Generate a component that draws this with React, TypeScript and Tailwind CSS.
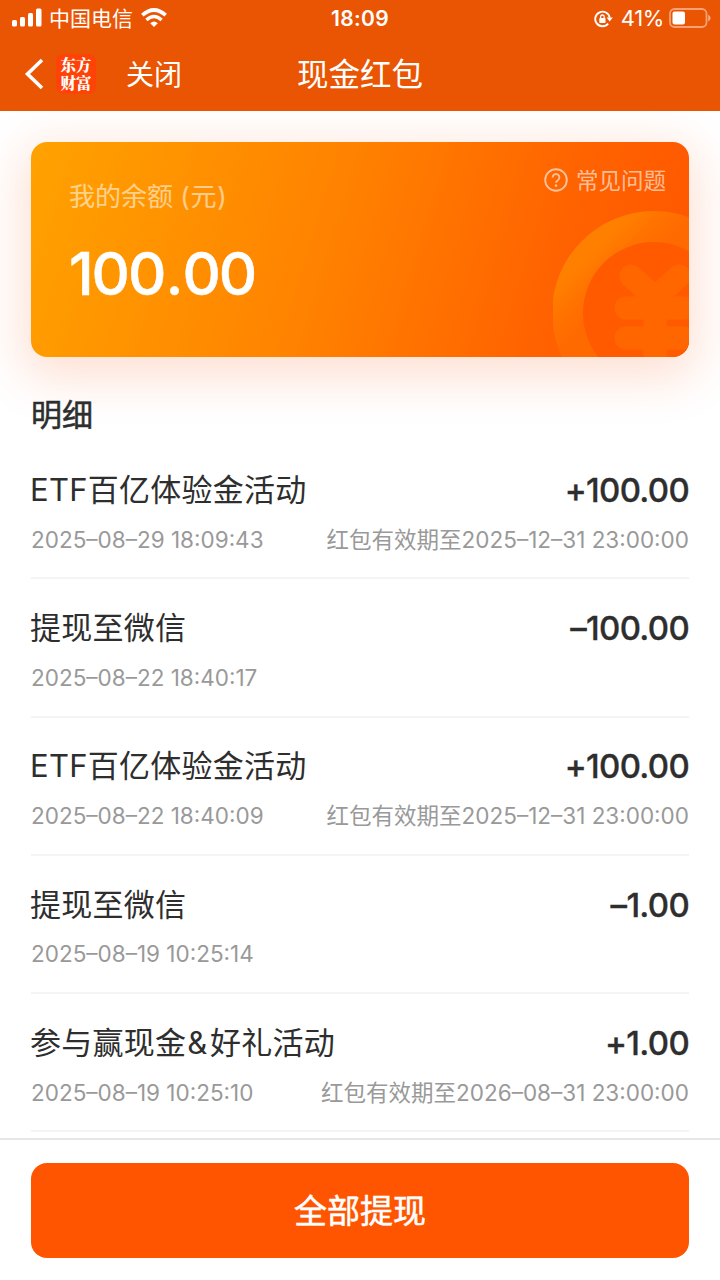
import type { ReactNode } from "react";

type Entry = {
  title: ReactNode;
  amount: string;
  time: string;
  expires?: string;
};

const entries: Entry[] = [
  {
    title: "ETF百亿体验金活动",
    amount: "+100.00",
    time: "2025–08–29 18:09:43",
    expires: "红包有效期至2025–12–31 23:00:00",
  },
  {
    title: "提现至微信",
    amount: "–100.00",
    time: "2025–08–22 18:40:17",
  },
  {
    title: "ETF百亿体验金活动",
    amount: "+100.00",
    time: "2025–08–22 18:40:09",
    expires: "红包有效期至2025–12–31 23:00:00",
  },
  {
    title: "提现至微信",
    amount: "–1.00",
    time: "2025–08–19 10:25:14",
  },
  {
    title: (
      <>
        参与赢现金<span className="pr-[2.5px] pl-px">&</span>好礼活动
      </>
    ),
    amount: "+1.00",
    time: "2025–08–19 10:25:10",
    expires: "红包有效期至2026–08–31 23:00:00",
  },
];

function StatusBar() {
  return (
    <div className="grid h-9 grid-cols-3 items-center">
      <div className="flex items-center pl-3">
        <svg className="-mt-px" width="30" height="20" viewBox="0 0 30 20" fill="#fff">
          <rect x="0" y="12" width="5" height="6.5" rx="1.5" />
          <rect x="8" y="9" width="5" height="9.5" rx="1.5" />
          <rect x="16" y="5" width="5" height="13.5" rx="1.5" />
          <rect x="24" y="0.5" width="5.5" height="18" rx="1.5" />
        </svg>
        <span className="mt-px ml-[7px] text-[21px] leading-9">中国电信</span>
        <svg className="-mt-px ml-2" width="26" height="20" viewBox="0 0 26 20" fill="none" stroke="#fff">
          <path d="M1.3 7.2Q13 -3.2 24.7 7.2" strokeWidth="3.6" />
          <path d="M5.4 12Q13 5.2 20.6 12" strokeWidth="3.4" />
          <path d="M9.2 15.2Q13 11.8 16.8 15.2L13 19Z" fill="#fff" stroke="none" />
        </svg>
      </div>
      <span className="mt-px text-center text-[21px] font-semibold tracking-[0.3px]">18:09</span>
      <div className="flex items-center justify-end pr-[9px]">
        <svg width="19" height="18" viewBox="0 0 19 18" fill="none" stroke="#fff">
          <path d="M14.2 13.6A7.3 7.3 0 1 1 15.7 7.6" strokeWidth="1.9" />
          <path d="M12.6 7.6H18.8L15.7 11.6Z" fill="#fff" stroke="none" />
          <rect x="5.3" y="8" width="6.2" height="5" rx="0.8" fill="#fff" stroke="none" />
          <path d="M6.6 8.3V6.8a1.8 1.8 0 0 1 3.6 0V8.3" strokeWidth="1.3" />
        </svg>
        <span className="ml-2 text-[22px] tracking-[-0.4px]">41%</span>
        <svg className="-mt-px ml-[5px]" width="42" height="20" viewBox="0 0 42 20" fill="none">
          <rect x="1" y="1" width="36.5" height="18" rx="4.5" stroke="#fff" strokeOpacity="0.45" strokeWidth="1.8" />
          <rect x="3.5" y="3.5" width="12.5" height="13" rx="2" fill="#fff" />
          <path d="M39.2 6.5Q41.6 8 41.6 10T39.2 13.5Z" fill="#fff" fillOpacity="0.5" />
        </svg>
      </div>
    </div>
  );
}

function NavBar() {
  return (
    <div className="grid h-[75px] grid-cols-3 items-center">
      <div className="flex items-center pl-6">
        <svg width="20" height="32" viewBox="0 0 20 32" fill="none" stroke="#fff" strokeWidth="3.6">
          <path d="M18 2L3.5 16L18 30" />
        </svg>
        <div className="ml-3 flex h-10 w-10 items-center justify-center rounded-lg bg-[#ff4205]">
          <p className="w-8 text-center font-['Noto_Serif_CJK_SC','Noto_Sans_CJK_SC',sans-serif] text-[15.5px] leading-[17.5px] font-black break-all">
            东方财富
          </p>
        </div>
        <span className="mt-0.5 ml-[30px] text-[28px] leading-10">关闭</span>
      </div>
      <h1 className="mt-0.5 text-center text-[31.5px] leading-10">现金红包</h1>
    </div>
  );
}

function Coin() {
  return (
    <svg className="absolute right-0 bottom-0" width="136" height="147" viewBox="0 0 136 147" fill="none">
      <defs>
        <linearGradient id="ring" x1="0.18" y1="0.18" x2="0.36" y2="0.36">
          <stop offset="0" stopColor="#ff8000" />
          <stop offset="0.2" stopColor="#ff7d00" />
          <stop offset="0.5" stopColor="#ff7300" />
          <stop offset="1" stopColor="#ff6a00" />
        </linearGradient>
      </defs>
      <circle cx="101" cy="103" r="72" fill="#ff5a00" />
      <path
        d="M101 1a102 102 0 1 0 0 204a102 102 0 1 0 0-204ZM101 32a71 71 0 1 1 0 142a71 71 0 1 1 0-142Z"
        fill="url(#ring)"
        fillRule="evenodd"
      />
      <path
        d="M78 66L102 88L126 66M73 98H131M73 128H131M102 90V147"
        stroke="#ff6600"
        strokeWidth="23"
        strokeLinecap="round"
        strokeLinejoin="round"
      />
    </svg>
  );
}

function BalanceCard() {
  return (
    <section className="relative flex h-[215px] justify-between overflow-hidden rounded-2xl bg-[linear-gradient(107deg,#ffa200_0%,#ff8200_45%,#ff6200_78%,#ff5500_100%)]">
      <Coin />
      <div className="relative pl-[38px]">
        <p className="mt-[35px] text-[26px] leading-10 text-white/55">
          我的余额 <span className="tracking-[0.7px]">(元)</span>
        </p>
        <p className="mt-[22px] text-[59.5px] leading-[68px] font-medium tracking-[-2.1px] [-webkit-text-stroke:0.5px]">
          100<span className="mx-[1.2px]">.</span>00
        </p>
      </div>
      <div className="relative mt-[22px] mr-[23px] flex h-8 items-center gap-2 text-white/60">
        <svg width="24" height="24" viewBox="0 0 24 24" fill="none" stroke="currentColor" strokeWidth="1.9">
          <circle cx="12" cy="12" r="10.8" />
          <path d="M8.6 9.4a3.4 3.4 0 1 1 5.3 2.8C12.6 13 12 13.5 12 14.8" />
          <circle cx="12" cy="17.6" r="1.3" fill="currentColor" stroke="none" />
        </svg>
        <span className="mt-0.5 text-[22.5px]">常见问题</span>
      </div>
    </section>
  );
}

function EntryRow({ entry }: { entry: Entry }) {
  return (
    <li className="h-[138.25px] border-b-2 border-[#f4f4f4] pt-[29px]">
      <div className="flex h-10 items-center justify-between text-[#2e2e2e]">
        <span className="-ml-px text-[31px] tracking-[0.25px]">{entry.title}</span>
        <span className="mt-px text-[33px] font-medium tracking-[-0.7px] [-webkit-text-stroke:0.3px]">
          {entry.amount}
        </span>
      </div>
      <div className="mt-[13.5px] flex h-8 items-center justify-between text-[22.5px] text-[#999]">
        <span>{entry.time}</span>
        {entry.expires && <span>{entry.expires}</span>}
      </div>
    </li>
  );
}

export default function App() {
  return (
    <div className="flex h-[1280px] w-[720px] flex-col overflow-hidden bg-white font-['Inter','Noto_Sans_CJK_SC',sans-serif] text-white">
      <header className="h-[111px] shrink-0 bg-[#ea5504]">
        <StatusBar />
        <NavBar />
      </header>

      <main className="h-[1027px] shrink-0 overflow-hidden px-[31px] pt-[31px]">
        <div className="rounded-2xl shadow-[0_13px_48px_8px_rgba(250,90,20,0.19)]">
          <BalanceCard />
        </div>
        <h2 className="mt-[38px] h-10 text-[31px] leading-10 text-[#2e2e2e] [-webkit-text-stroke:0.5px]">明细</h2>
        <ul className="mt-[6px]">
          {entries.map((entry) => (
            <EntryRow key={entry.time} entry={entry} />
          ))}
        </ul>
      </main>

      <footer className="flex-1 border-t-2 border-[#e6e6e6] px-[31px] pt-[23px]">
        <button className="h-[95px] w-full rounded-2xl bg-[#ff5500] pt-0.5 text-[33px] [-webkit-text-stroke:0.5px]">
          全部提现
        </button>
      </footer>
    </div>
  );
}
